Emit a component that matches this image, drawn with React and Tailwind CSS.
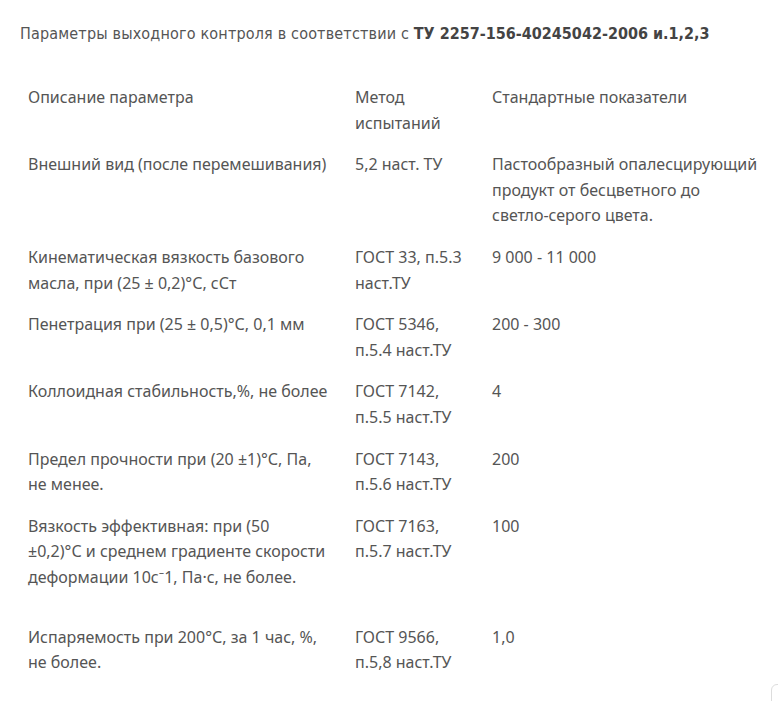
import React from "react";

const rows = [
  [
    "Внешний вид (после перемешивания)",
    "5,2 наст. ТУ",
    <>
      Пастообразный опалесцирующий продукт от бесцветного до
      <br />
      <span className="whitespace-nowrap">светло-серого</span> цвета.
    </>,
  ],
  ["Кинематическая вязкость базового масла, при (25 ± 0,2)°С, сСт", "ГОСТ 33, п.5.3 наст.ТУ", "9 000 - 11 000"],
  ["Пенетрация при (25 ± 0,5)°С, 0,1 мм", "ГОСТ 5346, п.5.4 наст.ТУ", "200 - 300"],
  ["Коллоидная стабильность,%, не более", "ГОСТ 7142, п.5.5 наст.ТУ", "4"],
  [
    <>
      Предел прочности при (20 ±1)°С, Па,
      <br />
      не менее.
    </>,
    "ГОСТ 7143, п.5.6 наст.ТУ",
    "200",
  ],
  [
    <>
      Вязкость эффективная: при (50
      <br />
      ±0,2)°С и среднем градиенте скорости деформации 10с⁻1, Па·с, не более.
    </>,
    "ГОСТ 7163, п.5.7 наст.ТУ",
    "100",
    true,
  ],
  ["Испаряемость при 200°С, за 1 час, %, не более.", "ГОСТ 9566, п.5,8 наст.ТУ", "1,0"],
];

export default function App() {
  return (
    <div className="relative w-[778px] h-[701px] overflow-hidden bg-white text-[#555]" style={{ fontFamily: '"Noto Sans", sans-serif' }}>
      <div className="pl-5 pt-[22px]">
        <p className="text-[16px] leading-6 text-[#555]" style={{ fontFamily: '"Liberation Sans Narrow", "DejaVu Sans Condensed", sans-serif' }}>
          <span className="tracking-[0.17px]">Параметры выходного контроля в соответствии с </span>
          <b className="font-bold text-[#444]">ТУ 2257-156-40245042-2006 и.1,2,3</b>
        </p>
        <table className="mt-[31px] w-[750px] table-fixed border-collapse text-[16px] leading-[1.6]">
          <colgroup>
            <col className="w-[327px]" />
            <col className="w-[137px]" />
            <col className="w-[286px]" />
          </colgroup>
          <tbody>
            <tr>
              <td className="p-2 align-top">Описание параметра</td>
              <td className="p-2 align-top">Метод испытаний</td>
              <td className="p-2 align-top">Стандартные показатели</td>
            </tr>
            {rows.map((r, i) => (
              <tr key={i}>
                <td className={`p-2 align-top ${r[3] ? "pb-[26px]" : ""}`}>{r[0]}</td>
                <td className="p-2 align-top">{r[1]}</td>
                <td className="p-2 align-top">{r[2]}</td>
              </tr>
            ))}
          </tbody>
        </table>
      </div>
      <div className="absolute left-[771px] top-[684px] w-[30px] h-[30px] rounded-[6px] border border-[#ddd] bg-white" />
    </div>
  );
}
